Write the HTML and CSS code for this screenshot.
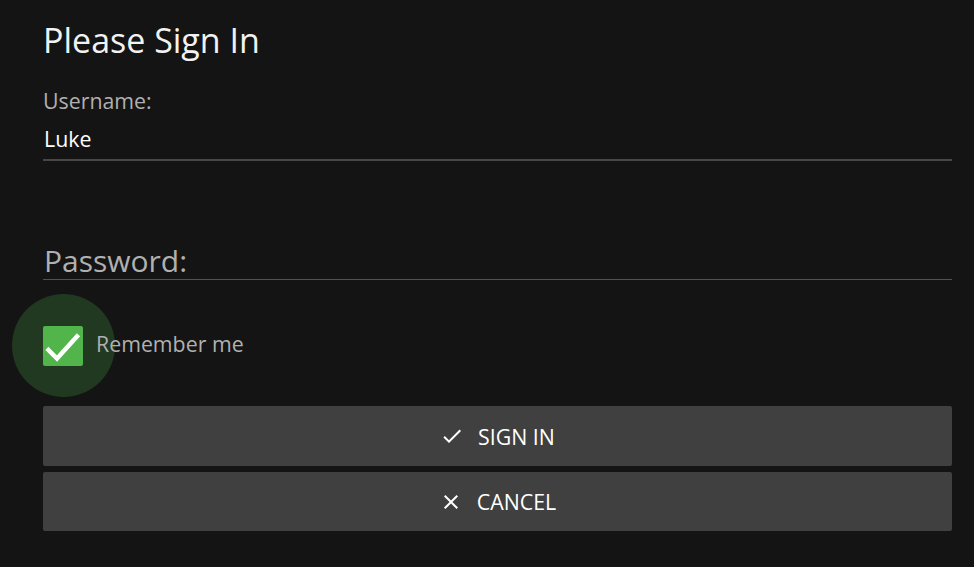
FILE: index.html
```html
<!DOCTYPE html>
<html>
<head>
<meta charset="utf-8">
<link rel="stylesheet" href="styles.css">
</head>
<body>
<div class="page">
  <h1 class="title">Please Sign In</h1>
  <div class="field user">
    <label class="label">Username:</label>
    <div class="value">Luke</div>
  </div>
  <div class="field pw">
    <div class="placeholder">Password:</div>
  </div>
  <div class="remember">
    <span class="cbwrap">
      <span class="halo"></span>
      <span class="box">
        <svg width="40" height="40" viewBox="0 0 40 40"><path d="M5.5 24 L14 32.5 L34 10.5" fill="none" stroke="#fff" stroke-width="4.5" stroke-linecap="square"/></svg>
      </span>
    </span>
    <span class="rtext">Remember me</span>
  </div>
  <div class="buttons">
    <button class="btn">
      <svg width="24" height="24" viewBox="0 0 24 24"><path d="M9 16.17L4.83 12l-1.42 1.41L9 19 21 7l-1.41-1.41z" fill="#fff"/></svg>
      <span>SIGN IN</span>
    </button>
    <button class="btn second">
      <svg width="24" height="24" viewBox="0 0 24 24"><path d="M19 6.41L17.59 5 12 10.59 6.41 5 5 6.41 10.59 12 5 17.59 6.41 19 12 13.41 17.59 19 19 17.59 13.41 12z" fill="#fff"/></svg>
      <span>CANCEL</span>
    </button>
  </div>
</div>
</body>
</html>
```

FILE: styles.css
```css
html, body {
  margin: 0;
  padding: 0;
  background: #141414;
  height: 100%;
}
body {
  font-family: "Open Sans", "Noto Sans", sans-serif;
  color: #fff;
}
.page {
  width: 909px;
  padding: 16px 0 0 43px;
}
.title {
  margin: 0;
  font-size: 34px;
  font-weight: 400;
  line-height: 48px;
  color: #f2f2f2;
}
.field.user {
  margin-top: 23px;
  border-bottom: 2px solid #474747;
}
.label {
  display: block;
  font-size: 21.33px;
  line-height: 28px;
  color: #b0b0b0;
}
.value {
  font-size: 21.33px;
  line-height: 28px;
  padding: 10px 0 6px 1px;
  color: #fff;
}
.field.pw {
  margin-top: 81px;
  border-bottom: 1px solid #525252;
}
.placeholder {
  font-size: 30px;
  line-height: 37px;
  color: #b0b0b0;
  padding-left: 1px;
}
.remember {
  display: flex;
  align-items: center;
  margin-top: 46px;
  height: 40px;
}
.cbwrap {
  position: relative;
  width: 40px;
  height: 40px;
  flex: none;
}
.halo {
  position: absolute;
  left: -31px;
  top: -32px;
  width: 103px;
  height: 103px;
  border-radius: 50%;
  background: #213821;
}
.box {
  position: relative;
  display: block;
  width: 40px;
  height: 40px;
  border-radius: 2px;
  background: #52b54b;
}
.box svg { display: block; }
.rtext {
  position: relative;
  margin-left: 13px;
  padding-bottom: 6px;
  font-size: 21.33px;
  color: #b0b0b0;
}
.buttons {
  margin-top: 40px;
  display: flex;
  flex-direction: column;
  gap: 6px;
}
.btn {
  display: flex;
  align-items: center;
  justify-content: center;
  gap: 14px;
  height: 60px;
  width: 100%;
  border: none;
  border-radius: 2px;
  background: #404040;
  color: #fff;
  font-family: "Open Sans", "Noto Sans", sans-serif;
  font-size: 21.33px;
  padding: 0;
}
.btn.second { height: 59px; }
.btn svg { display: block; }
```
